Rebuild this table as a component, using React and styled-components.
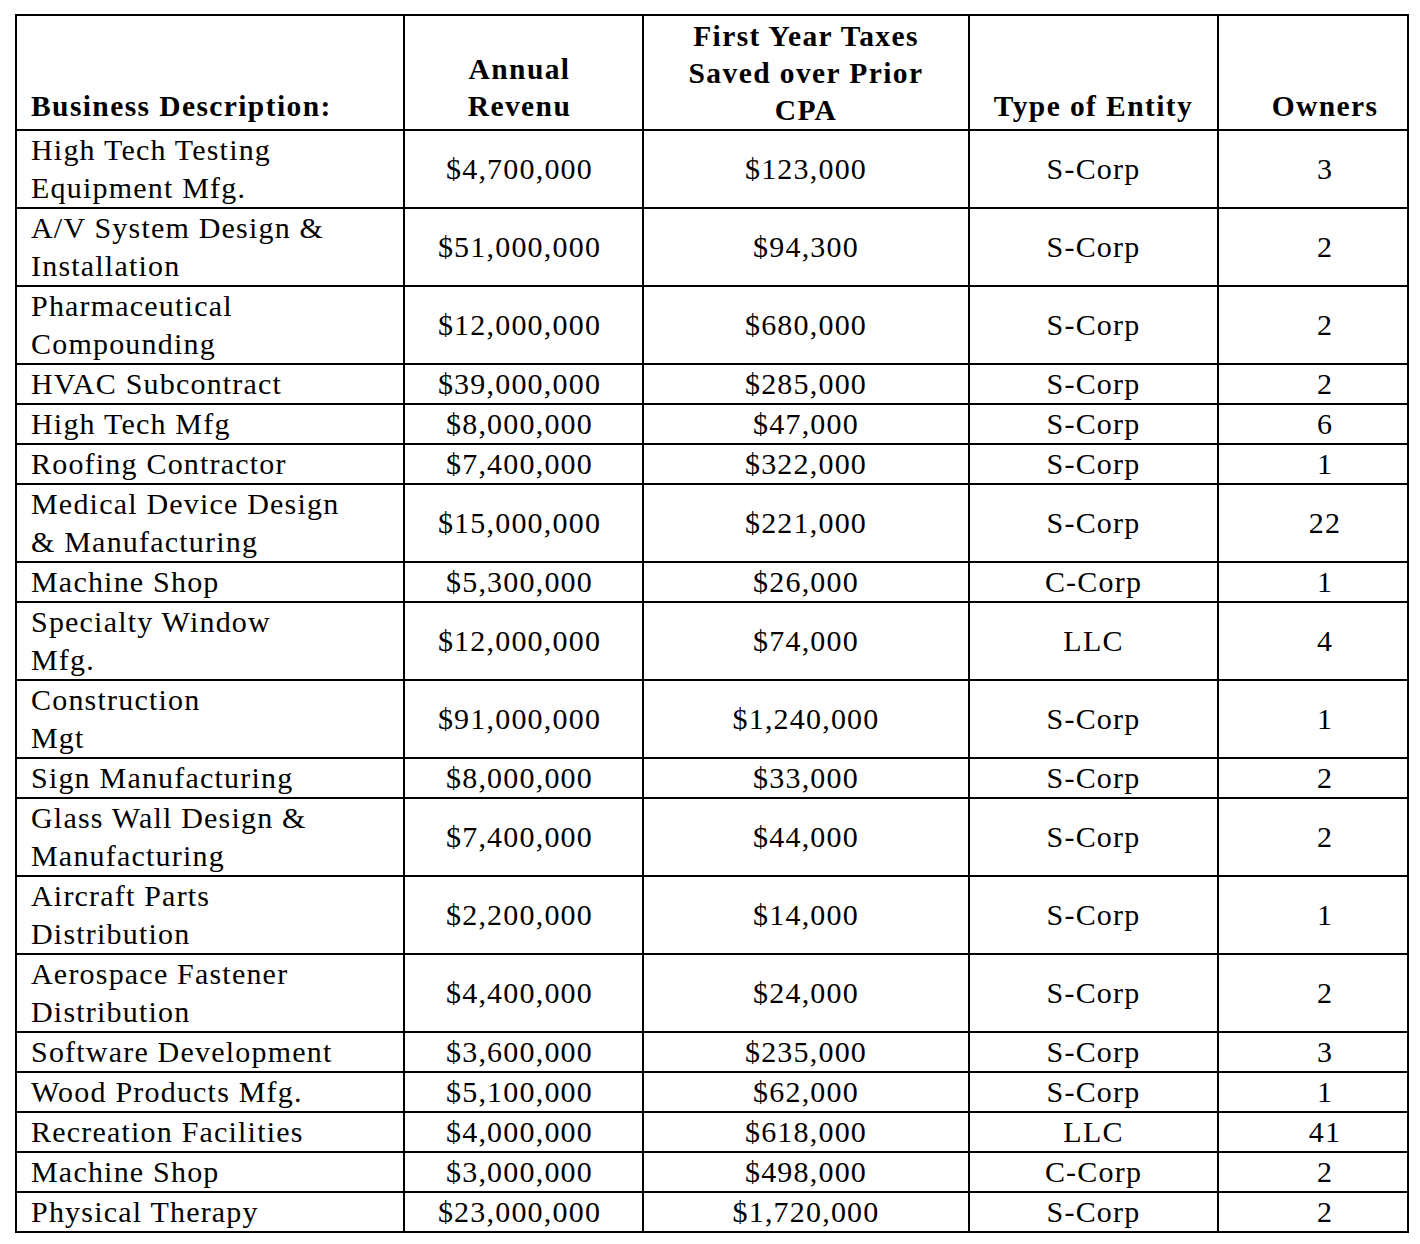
import React from 'react';
import styled, { createGlobalStyle } from 'styled-components';

const GlobalStyle = createGlobalStyle`
    html, body {
        margin: 0;
        padding: 0;
        background: #ffffff;
    }
    body {
        font-family: "Liberation Serif", "Times New Roman", serif;
        color: #000000;
    }
`

const rows = [
    [['High Tech Testing', 'Equipment Mfg.'], '$4,700,000', '$123,000', 'S-Corp', '3'],
    [['A/V System Design &', 'Installation'], '$51,000,000', '$94,300', 'S-Corp', '2'],
    [['Pharmaceutical', 'Compounding'], '$12,000,000', '$680,000', 'S-Corp', '2'],
    [['HVAC Subcontract'], '$39,000,000', '$285,000', 'S-Corp', '2'],
    [['High Tech Mfg'], '$8,000,000', '$47,000', 'S-Corp', '6'],
    [['Roofing Contractor'], '$7,400,000', '$322,000', 'S-Corp', '1'],
    [['Medical Device Design', '& Manufacturing'], '$15,000,000', '$221,000', 'S-Corp', '22'],
    [['Machine Shop'], '$5,300,000', '$26,000', 'C-Corp', '1'],
    [['Specialty Window', 'Mfg.'], '$12,000,000', '$74,000', 'LLC', '4'],
    [['Construction', 'Mgt'], '$91,000,000', '$1,240,000', 'S-Corp', '1'],
    [['Sign Manufacturing'], '$8,000,000', '$33,000', 'S-Corp', '2'],
    [['Glass Wall Design &', 'Manufacturing'], '$7,400,000', '$44,000', 'S-Corp', '2'],
    [['Aircraft Parts', 'Distribution'], '$2,200,000', '$14,000', 'S-Corp', '1'],
    [['Aerospace Fastener', 'Distribution'], '$4,400,000', '$24,000', 'S-Corp', '2'],
    [['Software Development'], '$3,600,000', '$235,000', 'S-Corp', '3'],
    [['Wood Products Mfg.'], '$5,100,000', '$62,000', 'S-Corp', '1'],
    [['Recreation Facilities'], '$4,000,000', '$618,000', 'LLC', '41'],
    [['Machine Shop'], '$3,000,000', '$498,000', 'C-Corp', '2'],
    [['Physical Therapy'], '$23,000,000', '$1,720,000', 'S-Corp', '2'],
]

// column paddings so the text sits where the original doc put it
const colPad = [
    { left: 14, right: 0, align: 'flex-start' },
    { left: 0, right: 8, align: 'center' },
    { left: 0, right: 0, align: 'center' },
    { left: 0, right: 0, align: 'center' },
    { left: 24, right: 0, align: 'center' },
]

export default function App() {
    return (
        <React.Fragment>
            <GlobalStyle />
            <Page>
                <Grid>
                    <HeadCell $pad={colPad[0]}>
                        <HeadText>Business Description:</HeadText>
                    </HeadCell>
                    <HeadCell $pad={colPad[1]}>
                        <HeadText>Annual<br />Revenu</HeadText>
                    </HeadCell>
                    <HeadCell $pad={colPad[2]} $tight>
                        <HeadText>First Year Taxes<br />Saved over Prior<br />CPA</HeadText>
                    </HeadCell>
                    <HeadCell $pad={colPad[3]}>
                        <HeadText>Type of Entity</HeadText>
                    </HeadCell>
                    <HeadCell $pad={colPad[4]}>
                        <HeadText>Owners</HeadText>
                    </HeadCell>

                    {rows.map((row, i) => (
                        <React.Fragment key={i}>
                            <Cell $pad={colPad[0]}>
                                <CellText>
                                    {row[0].map((line, j) => (
                                        <React.Fragment key={j}>
                                            {j > 0 && <br />}
                                            {line}
                                        </React.Fragment>
                                    ))}
                                </CellText>
                            </Cell>
                            {row.slice(1).map((value, j) => (
                                <Cell key={j} $pad={colPad[j + 1]}>
                                    <CellText>{value}</CellText>
                                </Cell>
                            ))}
                        </React.Fragment>
                    ))}
                </Grid>
            </Page>
        </React.Fragment>
    );
}

const Page = styled.div`
    padding: 14px 0 0 15px;
    width: 1420px;
    box-sizing: border-box;
`

const Grid = styled.div`
    display: grid;
    grid-template-columns: 388px 239px 326px 249px 190px;
    width: max-content;
    border-top: 2px solid #000;
    border-left: 2px solid #000;
`

const HeadCell = styled.div`
    display: flex;
    align-items: flex-end;
    justify-content: ${p => p.$pad.align};
    text-align: ${p => (p.$pad.align === 'center' ? 'center' : 'left')};
    height: 115px;
    box-sizing: border-box;
    padding-left: ${p => p.$pad.left}px;
    padding-right: ${p => p.$pad.right}px;
    padding-bottom: ${p => (p.$tight ? 0 : 4)}px;
    border-right: 2px solid #000;
    border-bottom: 2px solid #000;
`

const HeadText = styled.span`
    font-weight: bold;
    font-size: 29.5px;
    line-height: 37px;
    letter-spacing: 1.4px;
    white-space: nowrap;
`

const Cell = styled.div`
    display: flex;
    align-items: center;
    justify-content: ${p => p.$pad.align};
    text-align: ${p => (p.$pad.align === 'center' ? 'center' : 'left')};
    padding-left: ${p => p.$pad.left}px;
    padding-right: ${p => p.$pad.right}px;
    border-right: 2px solid #000;
    border-bottom: 2px solid #000;
`

const CellText = styled.span`
    font-size: 30px;
    line-height: 38px;
    letter-spacing: 1.2px;
    white-space: nowrap;
`
